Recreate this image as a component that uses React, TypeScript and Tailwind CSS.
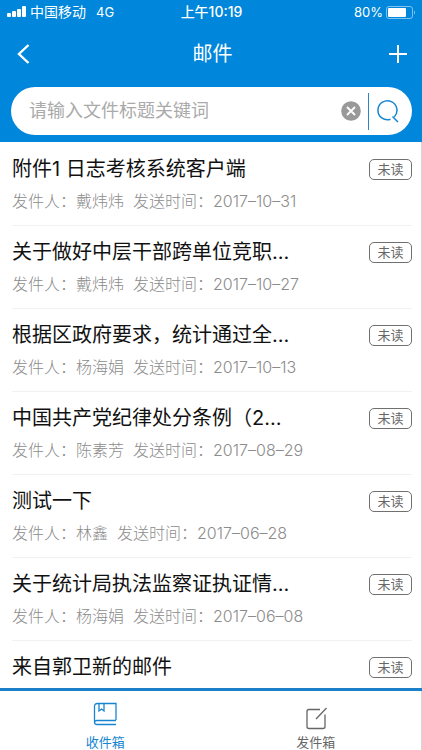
import { useState } from "react";

type Mail = { title: string; sender: string; date: string };

const mails: Mail[] = [
  { title: "附件1 日志考核系统客户端", sender: "戴炜炜", date: "2017–10–31" },
  { title: "关于做好中层干部跨单位竞职…", sender: "戴炜炜", date: "2017–10–27" },
  { title: "根据区政府要求，统计通过全…", sender: "杨海娟", date: "2017–10–13" },
  { title: "中国共产党纪律处分条例（2…", sender: "陈素芳", date: "2017–08–29" },
  { title: "测试一下", sender: "林鑫", date: "2017–06–28" },
  { title: "关于统计局执法监察证执证情…", sender: "杨海娟", date: "2017–06–08" },
];

const lastMail = "来自郭卫新的邮件";

function StatusBar() {
  return (
    <div className="grid h-6 grid-cols-3 items-center pl-[7px] pr-[6px] text-sm leading-6">
      <div className="flex items-center whitespace-nowrap">
        <svg width="19" height="12" viewBox="0 0 19 12" fill="currentColor" aria-hidden="true">
          <rect x="0" y="7" width="4" height="4" rx="1" />
          <rect x="5" y="5" width="4" height="6" rx="1" />
          <rect x="10" y="3" width="4" height="8" rx="1" />
          <rect x="15" y="0" width="4" height="11" rx="1" />
        </svg>
        <span className="ml-1">中国移动</span>
        <span className="ml-2.5 text-[13px]">4G</span>
      </div>
      <div className="text-center font-medium">上午10:19</div>
      <div className="flex items-center justify-end gap-[3px] text-[13px]">
        <span>80%</span>
        <svg width="30" height="13" viewBox="0 0 30 13" aria-hidden="true">
          <rect x="0.5" y="0.5" width="26" height="12" rx="2.5" fill="none" stroke="#7fc3ee" />
          <rect x="2" y="2" width="18" height="9" rx="1" fill="#fff" />
          <path d="M28 4.500c1.400.5 1.400 3.500 0 4z" fill="#7fc3ee" />
        </svg>
      </div>
    </div>
  );
}

function UnreadBadge() {
  return (
    <span className="flex h-[21px] w-[43px] shrink-0 items-center justify-center rounded-[5px] border border-[#707070] text-[13px] leading-none text-[#666]">
      未读
    </span>
  );
}

function MailTitle({ title }: { title: string }) {
  return (
    <div className="flex items-center justify-between">
      <h2 className="whitespace-nowrap text-xl leading-7 text-[#111]">{title}</h2>
      <UnreadBadge />
    </div>
  );
}

export default function App() {
  const [query, setQuery] = useState("");
  return (
    <div className="flex h-screen flex-col overflow-hidden bg-white font-['Inter','Noto_Sans_CJK_SC',sans-serif]">
      <header className="shrink-0 bg-[#0086da] pb-[7px] text-white">
        <StatusBar />
        <div className="flex h-[63px] items-center justify-between pb-1 pl-[17px] pr-[14px]">
          <button type="button" aria-label="返回" className="flex w-5">
            <svg width="14" height="20" viewBox="0 0 14 20" fill="none" stroke="currentColor" strokeWidth="2.4" aria-hidden="true">
              <path d="M11.500 1 2 10l9.500 9" />
            </svg>
          </button>
          <h1 className="text-xl leading-7">邮件</h1>
          <button type="button" aria-label="新建" className="flex w-5 justify-end">
            <svg width="20" height="20" viewBox="0 0 20 20" stroke="currentColor" strokeWidth="2" aria-hidden="true">
              <path d="M1 10h18M10 1v18" />
            </svg>
          </button>
        </div>
        <form
          className="ml-[11px] mr-2.5 flex h-12 items-center rounded-full bg-white pl-[18px] pr-3"
          onSubmit={(e) => e.preventDefault()}
        >
          <input
            type="text"
            aria-label="请输入文件标题关键词"
            placeholder="请输入文件标题关键词"
            value={query}
            onChange={(e) => setQuery(e.target.value)}
            className="min-w-0 flex-1 bg-transparent text-lg leading-6 text-[#333] outline-none placeholder:text-[#aaa]"
          />
          <button type="button" aria-label="清除" onClick={() => setQuery("")} className="mr-[7px]">
            <svg width="20" height="20" viewBox="0 0 20 20" aria-hidden="true">
              <circle cx="10" cy="10" r="9.800" fill="#999" />
              <path d="m6 6 8 8m0-8-8 8" stroke="#fff" strokeWidth="1.800" />
            </svg>
          </button>
          <span className="h-[37px] w-px bg-[#2a86c8]" />
          <button type="submit" aria-label="搜索" className="ml-[7px]">
            <svg width="24" height="24" viewBox="0 0 24 24" fill="none" stroke="#1686d2" strokeWidth="1.500" aria-hidden="true">
              <path d="M14.500 20.300A9.500 9.500 0 1 1 18.200 18" />
              <path d="m16.500 17.500 5.500 5.500" />
            </svg>
          </button>
        </form>
      </header>

      <main className="relative min-h-0 flex-1 overflow-hidden border-r border-[#d4d4d4] pl-3 pr-[9px] pt-px">
        <ul>
          {mails.map((mail) => (
            <li key={mail.title} className="h-[83px] border-b border-[#f1f1f1] pt-3">
              <MailTitle title={mail.title} />
              <p className="mt-[6px] flex gap-[9px] whitespace-nowrap text-base font-light leading-6 text-[#8c8c8c]">
                <span>发件人：{mail.sender}</span>
                <span>发送时间：{mail.date}</span>
              </p>
            </li>
          ))}
          <li className="pt-3">
            <MailTitle title={lastMail} />
          </li>
        </ul>
        <span className="absolute -right-px top-[203px] h-[52px] w-px bg-white" aria-hidden="true" />
      </main>

      <nav className="shrink-0 border-t-[3px] border-[#1c80c8] text-[13px] leading-4">
        <div className="grid h-[59px] grid-cols-2 border-r border-[#d4d4d4]">
          <button type="button" className="flex flex-col items-center justify-end text-[#1686d2]">
            <svg width="24" height="24" viewBox="0 0 24 24" fill="none" stroke="currentColor" strokeWidth="1.300" aria-hidden="true">
              <path d="M23 18V1.500H4.500Q1.500 1.500 1.500 4.500V20Q1.500 22.500 4 22.500H23M1.500 20.500Q1.500 18.500 4 18.500H23" />
              <path d="M6 1.500V9l2.500-2L11 9V1.500" />
            </svg>
            <span className="mt-2">收件箱</span>
          </button>
          <button type="button" className="flex flex-col items-center justify-end text-[#666]">
            <svg width="24" height="24" viewBox="0 0 24 24" fill="none" stroke="currentColor" strokeWidth="1.300" aria-hidden="true">
              <path d="M16 3.500H5Q3 3.500 3 5.500V20.500Q3 22.500 5 22.500H19Q21 22.500 21 20.500V8.500" />
              <path d="M12 13 22.500 2" />
            </svg>
            <span className="mt-1">发件箱</span>
          </button>
        </div>
      </nav>
    </div>
  );
}
